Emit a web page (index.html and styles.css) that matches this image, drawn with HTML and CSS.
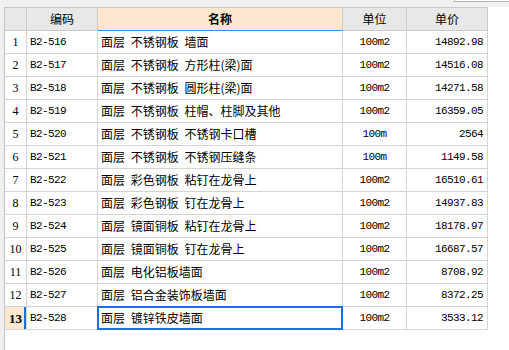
FILE: index.html
```html
<!DOCTYPE html>
<html lang="zh">
<head>
<meta charset="utf-8">
<title>定额列表</title>
<link rel="stylesheet" href="styles.css">
</head>
<body>
<div class="top"><div class="topbox"></div></div>
<div class="main">
  <div class="side"></div>
  <div class="grid">
    <div class="c hd num"></div>
    <div class="c hd">编码</div>
    <div class="c hd sel-col">名称</div>
    <div class="c hd">单位</div>
    <div class="c hd">单价</div>

    <div class="c num">1</div><div class="c code">B2-516</div><div class="c name">面层 不锈钢板 墙面</div><div class="c unit">100m2</div><div class="c price">14892.98</div>
    <div class="c num">2</div><div class="c code">B2-517</div><div class="c name">面层 不锈钢板 方形柱(梁)面</div><div class="c unit">100m2</div><div class="c price">14516.08</div>
    <div class="c num">3</div><div class="c code">B2-518</div><div class="c name">面层 不锈钢板 圆形柱(梁)面</div><div class="c unit">100m2</div><div class="c price">14271.58</div>
    <div class="c num">4</div><div class="c code">B2-519</div><div class="c name">面层 不锈钢板 柱帽、柱脚及其他</div><div class="c unit">100m2</div><div class="c price">16359.05</div>
    <div class="c num">5</div><div class="c code">B2-520</div><div class="c name">面层 不锈钢板 不锈钢卡口槽</div><div class="c unit">100m</div><div class="c price">2564</div>
    <div class="c num">6</div><div class="c code">B2-521</div><div class="c name">面层 不锈钢板 不锈钢压缝条</div><div class="c unit">100m</div><div class="c price">1149.58</div>
    <div class="c num">7</div><div class="c code">B2-522</div><div class="c name">面层 彩色钢板 粘钉在龙骨上</div><div class="c unit">100m2</div><div class="c price">16510.61</div>
    <div class="c num">8</div><div class="c code">B2-523</div><div class="c name">面层 彩色钢板 钉在龙骨上</div><div class="c unit">100m2</div><div class="c price">14937.83</div>
    <div class="c num">9</div><div class="c code">B2-524</div><div class="c name">面层 镜面铜板 粘钉在龙骨上</div><div class="c unit">100m2</div><div class="c price">18178.97</div>
    <div class="c num">10</div><div class="c code">B2-525</div><div class="c name">面层 镜面铜板 钉在龙骨上</div><div class="c unit">100m2</div><div class="c price">16687.57</div>
    <div class="c num">11</div><div class="c code">B2-526</div><div class="c name">面层 电化铝板墙面</div><div class="c unit">100m2</div><div class="c price">8708.92</div>
    <div class="c num">12</div><div class="c code">B2-527</div><div class="c name">面层 铝合金装饰板墙面</div><div class="c unit">100m2</div><div class="c price">8372.25</div>
    <div class="c num sel-row">13</div><div class="c code">B2-528</div><div class="c name sel-cell">面层 镀锌铁皮墙面</div><div class="c unit">100m2</div><div class="c price">3533.12</div>
  </div>
</div>
</body>
</html>
```

FILE: styles.css
```css
* { box-sizing: border-box; }
html, body { margin: 0; padding: 0; }
body {
  width: 509px;
  height: 350px;
  overflow: hidden;
  background: #ffffff;
  font-family: "Noto Sans CJK SC", "Liberation Sans", sans-serif;
  font-size: 12px;
  color: #000;
}
.top {
  height: 7px;
  background: #f0f0f0;
  display: flex;
  align-items: flex-start;
}
.topbox {
  margin-left: auto;
  width: 55px;
  height: 2px;
  background: #ffffff;
  border-left: 1px solid #b4b4b4;
  border-bottom: 1px solid #b4b4b4;
}
.main {
  display: flex;
  align-items: flex-start;
  height: 343px;
}
.side {
  width: 5px;
  height: 343px;
  background: #f0f0f0;
  border-right: 1px solid #c4c4c4;
}
.grid {
  display: grid;
  grid-template-columns: 22px 71px 245px 64px 81px;
  grid-auto-rows: 23px;
  border-top: 1px solid #c8c8c8;
}
.c {
  border-right: 1px solid #d4d4d4;
  border-bottom: 1px solid #d4d4d4;
  display: flex;
  align-items: center;
  white-space: nowrap;
  overflow: hidden;
  line-height: 1;
}
.hd {
  background: #e8e8e8;
  justify-content: center;
  font-size: 12px;
  border-right-color: #cccccc;
  border-bottom-color: #c8c8c8;
}
.hd.sel-col {
  background: #fde8cf;
  font-weight: bold;
  border-bottom: 1px solid #3d8ee8;
}
.num {
  justify-content: center;
  font-family: "Liberation Serif", serif;
  font-size: 12px;
}
.num.hd { background: #e8e8e8; }
.sel-row {
  background: #fde8cf;
  font-weight: bold;
  font-size: 13px;
  box-shadow: inset -2px 0 0 #1f6fe0;
}
.code {
  font-family: "Liberation Mono", monospace;
  font-size: 11px;
  letter-spacing: -0.6px;
  padding-left: 3px;
}
.name {
  padding-left: 3px;
  word-spacing: 3px;
  font-size: 12px;
}
.unit {
  justify-content: center;
  font-family: "Liberation Mono", monospace;
  font-size: 11px;
  letter-spacing: -0.6px;
}
.price {
  justify-content: flex-end;
  font-family: "Liberation Mono", monospace;
  font-size: 11px;
  letter-spacing: -0.6px;
  padding-right: 4px;
}
.sel-cell {
  position: relative;
  overflow: visible;
}
.sel-cell::after {
  content: "";
  position: absolute;
  top: -1px;
  left: -1px;
  right: -1px;
  bottom: -1px;
  border: 2px solid #1f6fe0;
}
```
